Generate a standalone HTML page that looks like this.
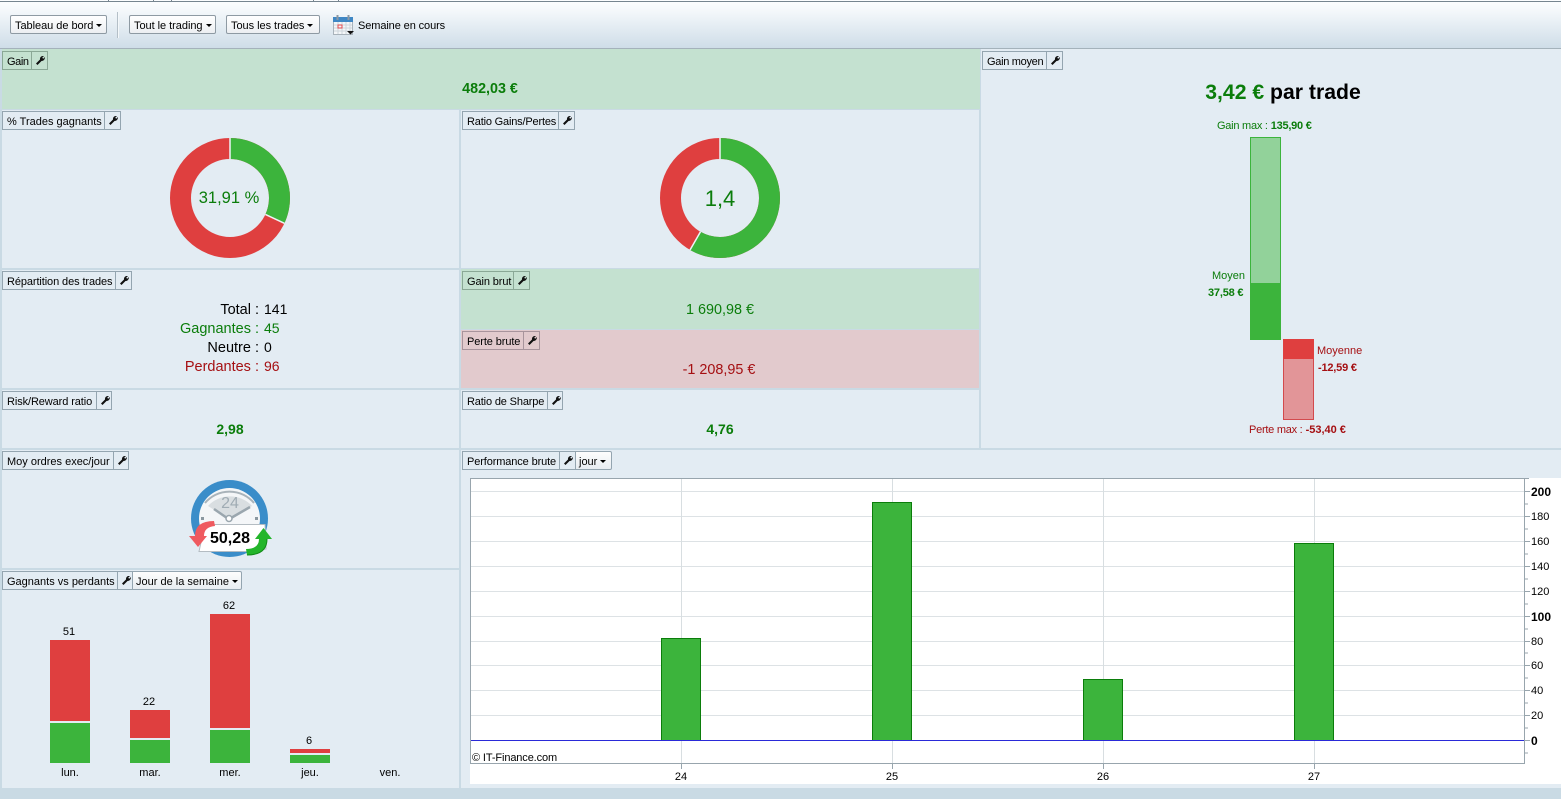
<!DOCTYPE html>
<html><head><meta charset="utf-8"><title>Tableau de bord</title>
<style>
html,body{margin:0;padding:0}
body{width:1561px;height:799px;position:relative;overflow:hidden;background:#c9dae4;font-family:"Liberation Sans",Arial,sans-serif;font-size:11px;color:#000}
.p{position:absolute;background:#e3ecf3}
.g{background:#c4e1d0}.r{background:#e2cacd}
.t{position:absolute;white-space:nowrap;line-height:16px}
.c{text-align:center}
.h{position:absolute;display:flex;height:19px;white-space:nowrap}
.h span{display:block;border:1px solid #94a5b0;border-left-width:0;padding:0 0 0 3px;box-sizing:border-box;height:19px;background:#e3ecf3;overflow:hidden;line-height:20px}
.h span:first-child{border-left-width:1px;padding:0 0 0 4px}
.h .w{width:16px;padding:0}
.h.gh span{background:#c4e1d0;border-color:#8aa896}
.h.rh span{background:#e2cacd;border-color:#a8949c}
.h .d{background:linear-gradient(#fdfdfd,#e8edf1);border-radius:0 2px 2px 0}
.h .w svg{display:block;margin:4px 0 0 4px}
.b{position:absolute;height:19px;box-sizing:border-box;border:1px solid #8e9aa3;border-radius:2px;background:linear-gradient(#fff,#eceff2);line-height:20px;padding-left:4px;white-space:nowrap;letter-spacing:-.04px}
.ar{display:inline-block;width:0;height:0;border:3px solid transparent;border-top:3.500px solid #000;border-bottom:0;margin-left:3px;vertical-align:2px}
.gr{color:#0b7d0b}.rd{color:#a50f12}
.s{position:absolute}
</style></head><body>
<div class="p" style="left:0;top:0;width:1561px;height:48px;background:linear-gradient(#fbfdfe 2px,#f3f7fa 12px,#cfdde8 48px)"></div>
<div class="s" style="left:0;top:1px;width:1561px;height:1px;background:#76858f"></div>
<div class="s" style="left:108px;top:0;width:1px;height:1px;background:#76858f"></div>
<div class="s" style="left:153px;top:0;width:1px;height:1px;background:#76858f"></div>
<div class="s" style="left:171px;top:0;width:1px;height:1px;background:#76858f"></div>
<div class="s" style="left:313px;top:0;width:1px;height:1px;background:#76858f"></div>
<div class="s" style="left:338px;top:0;width:1px;height:1px;background:#76858f"></div>
<div class="s" style="left:0;top:48px;width:1561px;height:1px;background:#a4b2bb"></div>
<div class="b" style="left:10px;top:15px;width:97px">Tableau de bord<i class="ar"></i></div>
<div class="s" style="left:117px;top:12px;width:1px;height:26px;background:#b4bfc7;box-shadow:1px 0 0 #f4f8fa"></div>
<div class="b" style="left:129px;top:15px;width:87px">Tout le trading<i class="ar"></i></div>
<div class="b" style="left:226px;top:15px;width:94px">Tous les trades<i class="ar"></i></div>
<svg class="s" style="left:332px;top:14px" width="24" height="22" viewBox="0 0 24 22">
<rect x="1.500" y="3.500" width="19" height="17" fill="#f4f6f8" stroke="#a9b3bb"/><rect x="1" y="3" width="20" height="5" fill="#3f87c4"/>
<path d="M5.500 1v5M16.500 1v5" stroke="#8b98a3" stroke-width="2"/>
<path d="M2 11h18M2 14h18M2 17h18M6 8v12M10 8v12M14 8v12M18 8v12" stroke="#cdd5db"/>
<rect x="6" y="11" width="4" height="3" fill="none" stroke="#e2484c"/>
<path d="M15 17h7l-3.500 3.500z" fill="#111"/></svg>
<div class="t" style="left:358px;top:18px;letter-spacing:-.1px">Semaine en cours</div>

<div class="p g" style="left:2px;top:49px;width:978px;height:60px"></div>
<div class="p" style="left:2px;top:110px;width:457px;height:158px"></div>
<div class="p" style="left:461px;top:110px;width:518px;height:158px"></div>
<div class="p" style="left:2px;top:270px;width:457px;height:118px"></div>
<div class="p g" style="left:461px;top:269px;width:518px;height:60px"></div>
<div class="p r" style="left:461px;top:330px;width:518px;height:58px"></div>
<div class="p" style="left:2px;top:390px;width:457px;height:58px"></div>
<div class="p" style="left:461px;top:390px;width:518px;height:58px"></div>
<div class="p" style="left:981px;top:49px;width:580px;height:399px"></div>
<div class="p" style="left:2px;top:450px;width:457px;height:118px"></div>
<div class="p" style="left:2px;top:570px;width:457px;height:218px"></div>
<div class="p" style="left:461px;top:450px;width:1100px;height:338px"></div>

<svg width="0" height="0" style="position:absolute"><defs><symbol id="wr" viewBox="0 0 9 9"><path d="M0 7.500L4 3.500C3.800 1.500 5 0 7 0L8 0L6.200 1.800L7.200 2.800L9 1C9 3.500 7.500 5 5.500 5L1.500 9Z" fill="#111"/></symbol></defs></svg>

<div class="h gh" style="left:2px;top:51px"><span style="width:30px;letter-spacing:-.4px">Gain</span><span class="w"><svg width="9" height="9"><use href="#wr"/></svg></span></div>
<div class="h" style="left:2px;top:111px"><span style="width:103px">% Trades gagnants</span><span class="w"><svg width="9" height="9"><use href="#wr"/></svg></span></div>
<div class="h" style="left:462px;top:111px"><span style="width:97px;letter-spacing:-.18px">Ratio Gains/Pertes</span><span class="w"><svg width="9" height="9"><use href="#wr"/></svg></span></div>
<div class="h" style="left:982px;top:51px"><span style="width:65px;letter-spacing:-.3px">Gain moyen</span><span class="w"><svg width="9" height="9"><use href="#wr"/></svg></span></div>
<div class="h" style="left:2px;top:271px"><span style="width:114px;letter-spacing:-.1px">Répartition des trades</span><span class="w"><svg width="9" height="9"><use href="#wr"/></svg></span></div>
<div class="h gh" style="left:462px;top:271px"><span style="width:52px;letter-spacing:-.1px">Gain brut</span><span class="w"><svg width="9" height="9"><use href="#wr"/></svg></span></div>
<div class="h rh" style="left:462px;top:331px"><span style="width:62px;letter-spacing:-.1px">Perte brute</span><span class="w"><svg width="9" height="9"><use href="#wr"/></svg></span></div>
<div class="h" style="left:2px;top:391px"><span style="width:95px;letter-spacing:-.1px">Risk/Reward ratio</span><span class="w" style="width:15px"><svg width="9" height="9"><use href="#wr"/></svg></span></div>
<div class="h" style="left:462px;top:391px"><span style="width:86px;letter-spacing:-.15px">Ratio de Sharpe</span><span class="w" style="width:15px"><svg width="9" height="9"><use href="#wr"/></svg></span></div>
<div class="h" style="left:2px;top:451px"><span style="width:112px">Moy ordres exec/jour</span><span class="w" style="width:15px"><svg width="9" height="9"><use href="#wr"/></svg></span></div>
<div class="h" style="left:2px;top:571px"><span style="width:116px">Gagnants vs perdants</span><span class="w" style="width:15px"><svg width="9" height="9"><use href="#wr"/></svg></span><span class="d" style="width:109px">Jour de la semaine<i class="ar"></i></span></div>
<div class="h" style="left:462px;top:451px"><span style="width:98px;letter-spacing:-.12px">Performance brute</span><span class="w"><svg width="9" height="9"><use href="#wr"/></svg></span><span class="d" style="width:36px">jour<i class="ar"></i></span></div>

<div class="t c gr" style="left:2px;top:81px;width:976px;font-size:14.300px;font-weight:bold">482,03 €</div>

<svg class="s" style="left:0;top:0" width="1561" height="799">
<circle cx="230" cy="198" r="49.500" fill="none" stroke="#df3f3f" stroke-width="21"/>
<circle cx="230" cy="198" r="49.500" fill="none" stroke="#3cb43c" stroke-width="21" pathLength="100" stroke-dasharray="31.910 68.090" transform="rotate(-90 230 198)"/>
<path d="M230 138V159M265.400 214.400L284.400 223.300" stroke="#eef3f6" stroke-width="1.500"/>
<circle cx="720" cy="198" r="49.500" fill="none" stroke="#df3f3f" stroke-width="21"/>
<circle cx="720" cy="198" r="49.500" fill="none" stroke="#3cb43c" stroke-width="21" pathLength="360" stroke-dasharray="210 150" transform="rotate(-90 720 198)"/>
<path d="M720 138V159M700.500 231.800L690 250" stroke="#eef3f6" stroke-width="1.500"/>

<rect x="1250.500" y="137.500" width="30" height="146" fill="#92d29a" stroke="#3cb43c"/>
<rect x="1250" y="283" width="31" height="57" fill="#3cb43c"/>
<rect x="1283.500" y="339.500" width="30" height="80" fill="#e29598" stroke="#d34a4d"/>
<rect x="1283" y="339" width="31" height="20" fill="#df3f3f"/>

<circle cx="229.500" cy="518.500" r="38.500" fill="#3a8dc9"/>
<circle cx="229.500" cy="518.500" r="30.500" fill="#f4f6f8"/>
<path d="M208 506 A30 30 0 0 1 252 506 L229 519 Z" fill="#d9dee1"/>
<path d="M205 503 A32 32 0 0 1 254 503" fill="none" stroke="#a9b3ba" stroke-width="2"/>
<path d="M214 509L227 518M250 507L231 518" stroke="#9aa6ae" stroke-width="2.500"/>
<circle cx="229" cy="518.500" r="3" fill="#fff" stroke="#9aa6ae" stroke-width="1.500"/>
<rect x="201" y="517" width="3" height="3" fill="#8b98a0"/><rect x="255" y="517" width="3" height="3" fill="#8b98a0"/>
<path d="M205 524.500H265L266 549L247 551.500H199Z" fill="#fff" stroke="#b4bcc2"/>
<path d="M195 536Q195 521 214 521L215 526Q204 527 204 536H207L198 547L189 536Z" fill="#ef5a5f"/>
<path d="M267 539Q267 555 247 555L246 549Q259 549 259 539H255L263.500 528L272 539Z" fill="#23b52a"/>
<path d="M267 539Q267 555 247 555" fill="none" stroke="#118a17"/>

<rect x="50" y="640" width="40" height="81" fill="#df3f3f"/><rect x="50" y="723" width="40" height="40" fill="#3cb43c"/>
<rect x="130" y="710" width="40" height="28" fill="#df3f3f"/><rect x="130" y="740" width="40" height="23" fill="#3cb43c"/>
<rect x="210" y="614" width="40" height="114" fill="#df3f3f"/><rect x="210" y="730" width="40" height="33" fill="#3cb43c"/>
<rect x="290" y="749" width="40" height="4" fill="#df3f3f"/><rect x="290" y="755" width="40" height="8" fill="#3cb43c"/>

<rect x="470" y="478" width="1091" height="306" fill="#fff"/>
<path d="M470.500 491.500H1524M470.500 516.500H1524M470.500 541.500H1524M470.500 566.500H1524M470.500 591.500H1524M470.500 616.500H1524M470.500 641.500H1524M470.500 665.500H1524M470.500 690.500H1524M470.500 715.500H1524" stroke="#dde2e5"/>
<path d="M681.500 479V769M892.500 479V769M1103.500 479V769M1314.500 479V769" stroke="#d8dee1"/>
<rect x="661.500" y="638.500" width="39" height="102" fill="#3cb43c" stroke="#0b7d0b"/>
<rect x="872.500" y="502.500" width="39" height="238" fill="#3cb43c" stroke="#0b7d0b"/>
<rect x="1083.500" y="679.500" width="39" height="61" fill="#3cb43c" stroke="#0b7d0b"/>
<rect x="1294.500" y="543.500" width="39" height="197" fill="#3cb43c" stroke="#0b7d0b"/>
<path d="M471 740.500H1524" stroke="#2a2ad8"/>
<rect x="470.500" y="478.500" width="1054" height="285" fill="none" stroke="#98a5ad"/>
<path d="M1525 478.500h4M1525 491.500h5M1525 504h3M1525 516.500h5M1525 529h3M1525 541.500h5M1525 554h3M1525 566.500h5M1525 579h3M1525 591.500h5M1525 604h3M1525 616.500h5M1525 629h3M1525 641.500h5M1525 653h3M1525 665.500h5M1525 678h3M1525 690.500h5M1525 703h3M1525 715.500h5M1525 728h3M1525 740.500h5M1525 753h3" stroke="#98a5ad"/>
<path d="M681.500 764V769M892.500 764V769M1103.500 764V769M1314.500 764V769" stroke="#98a5ad"/>
</svg>

<div class="t c gr" style="left:129px;top:190px;width:200px;font-size:16.500px">31,91 %</div>
<div class="t c gr" style="left:620px;top:190px;width:200px;font-size:22px;line-height:18px">1,4</div>

<div class="t c" style="left:981px;top:81px;width:604px;font-size:21.200px;font-weight:bold;line-height:24px"><span class="gr">3,42 €</span> par trade</div>
<div class="t gr" style="left:1217px;top:118px;font-size:11px"><span style="letter-spacing:-.25px">Gain max :</span> <b style="letter-spacing:-.25px">135,90 €</b></div>
<div class="t gr" style="left:1212px;top:268px;font-size:11px">Moyen</div>
<div class="t gr" style="left:1208px;top:285px;font-size:11px;font-weight:bold;letter-spacing:-.2px">37,58 €</div>
<div class="t rd" style="left:1317px;top:343px;font-size:11px">Moyenne</div>
<div class="t rd" style="left:1318px;top:360px;font-size:11px;font-weight:bold;letter-spacing:-.2px">-12,59 €</div>
<div class="t rd" style="left:1249px;top:422px;font-size:11px"><span style="letter-spacing:-.25px">Perte max :</span> <b>-53,40 €</b></div>

<div class="t" style="left:0;top:302px;width:259px;text-align:right;font-size:14.500px">Total :</div><div class="t" style="left:264px;top:301px;font-size:14px">141</div>
<div class="t gr" style="left:0;top:321px;width:259px;text-align:right;font-size:14.500px">Gagnantes :</div><div class="t gr" style="left:264px;top:320px;font-size:14px">45</div>
<div class="t" style="left:0;top:340px;width:259px;text-align:right;font-size:14.500px">Neutre :</div><div class="t" style="left:264px;top:339px;font-size:14px">0</div>
<div class="t rd" style="left:0;top:359px;width:259px;text-align:right;font-size:14.500px">Perdantes :</div><div class="t rd" style="left:264px;top:358px;font-size:14px">96</div>

<div class="t c gr" style="left:461px;top:302px;width:518px;font-size:14.400px">1 690,98 €</div>
<div class="t c rd" style="left:460px;top:362px;width:518px;font-size:14.400px">-1 208,95 €</div>
<div class="t c gr" style="left:130px;top:421px;width:200px;font-size:14px;font-weight:bold">2,98</div>
<div class="t c gr" style="left:620px;top:421px;width:200px;font-size:14px;font-weight:bold">4,76</div>

<div class="t c" style="left:200px;top:496px;width:60px;font-size:16px;color:#a0acb4">24</div>
<div class="t c" style="left:200px;top:531px;width:60px;font-size:16px;font-weight:bold">50,28</div>

<div class="t c" style="left:49px;top:624px;width:40px">51</div>
<div class="t c" style="left:129px;top:694px;width:40px">22</div>
<div class="t c" style="left:209px;top:598px;width:40px">62</div>
<div class="t c" style="left:289px;top:733px;width:40px">6</div>
<div class="t c" style="left:50px;top:765px;width:40px">lun.</div>
<div class="t c" style="left:130px;top:765px;width:40px">mar.</div>
<div class="t c" style="left:210px;top:765px;width:40px">mer.</div>
<div class="t c" style="left:290px;top:765px;width:40px">jeu.</div>
<div class="t c" style="left:370px;top:765px;width:40px">ven.</div>

<div class="t" style="left:472px;top:750px;letter-spacing:-.12px">© IT-Finance.com</div>
<div class="t c" style="left:661px;top:769px;width:40px">24</div>
<div class="t c" style="left:872px;top:769px;width:40px">25</div>
<div class="t c" style="left:1083px;top:769px;width:40px">26</div>
<div class="t c" style="left:1294px;top:769px;width:40px">27</div>
<div class="t" style="left:1531px;top:484px;font-size:12px;font-weight:bold">200</div>
<div class="t" style="left:1531px;top:509px">180</div>
<div class="t" style="left:1531px;top:534px">160</div>
<div class="t" style="left:1531px;top:559px">140</div>
<div class="t" style="left:1531px;top:584px">120</div>
<div class="t" style="left:1531px;top:609px;font-size:12px;font-weight:bold">100</div>
<div class="t" style="left:1531px;top:634px">80</div>
<div class="t" style="left:1531px;top:658px">60</div>
<div class="t" style="left:1531px;top:683px">40</div>
<div class="t" style="left:1531px;top:708px">20</div>
<div class="t" style="left:1531px;top:733px;font-size:12px;font-weight:bold">0</div>
</body></html>
